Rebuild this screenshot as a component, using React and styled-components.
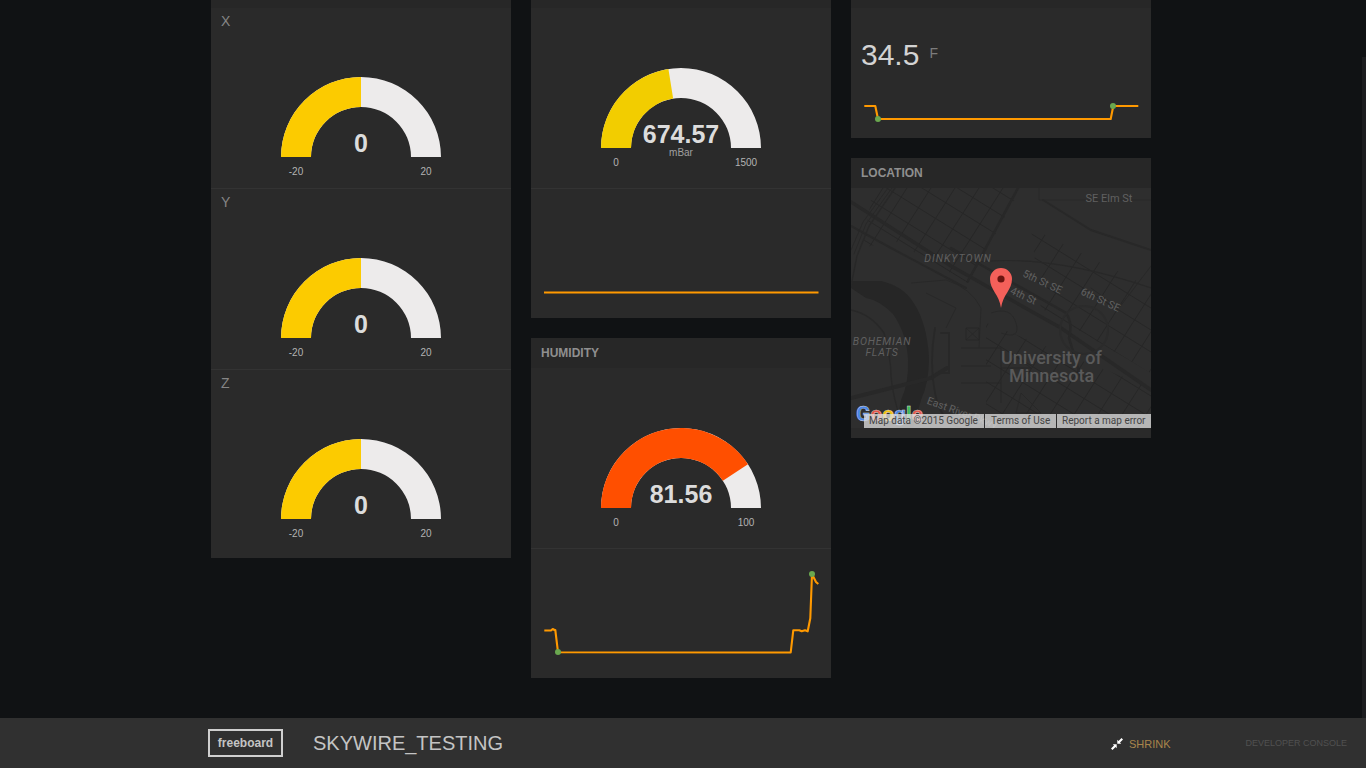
import React from "react";
import styled, { createGlobalStyle } from "styled-components";

const Global = createGlobalStyle`
  html, body { margin: 0; padding: 0; height: 100%; background: #101214; overflow: hidden; }
  #root { height: 100%; }
  * { box-sizing: border-box; }
`;

const Page = styled.div`
  height: 100vh;
  display: flex;
  flex-direction: column;
  font-family: "Liberation Sans", Arial, sans-serif;
  background: #101214;
`;
const Main = styled.main`
  flex: 1;
  min-height: 0;
  display: flex;
  overflow: hidden;
`;
const Board = styled.div`
  flex: 1;
  display: flex;
  justify-content: center;
  align-items: flex-start;
  gap: 20px;
  margin-top: -22px;
`;
const Gutter = styled.div`
  width: 4px;
  padding-top: 57px;
`;
const Thumb = styled.div`
  height: 100%;
  background: #1c1d1f;
`;
const Column = styled.div`
  width: 300px;
  display: flex;
  flex-direction: column;
  gap: 20px;
`;
const Pane = styled.section`
  background: #2a2a2a;
  padding-bottom: ${(p) => p.$bottom || 0}px;
`;
const PaneHeader = styled.header`
  height: 30px;
  line-height: 30px;
  padding-left: 10px;
  background: #272727;
  color: #8f8f8f;
  font-size: 12px;
  font-weight: 700;
`;
const Widget = styled.div`
  height: ${(p) => p.$height}px;
  & + & {
    border-top: 1px solid #333;
  }
`;
const WidgetTitle = styled.div`
  height: 49px;
  padding: 5px 10px 0;
  font-size: 14px;
  line-height: 16px;
  color: #858585;
`;
const GaugeSpacer = styled.div`
  height: 40px;
`;
const Svg = styled.svg`
  display: block;
`;
const ValueRow = styled.div`
  height: 70px;
  padding: 28px 10px 0;
  display: flex;
  align-items: flex-start;
`;
const BigValue = styled.span`
  font-size: 30px;
  line-height: 38px;
  color: #d3d3d3;
`;
const Units = styled.span`
  margin: 8px 0 0 10px;
  font-size: 14px;
  line-height: 18px;
  color: #7c7c7c;
`;
const MapWrap = styled.div`
  position: relative;
  height: 240px;
  overflow: hidden;
`;
const GoogleLogo = styled.div`
  position: absolute;
  left: 5px;
  bottom: 0;
  font-family: Roboto, sans-serif;
  font-size: 21px;
  line-height: 27px;
  font-weight: 700;
  -webkit-text-stroke: 0.4px #ddd;
`;
const LogoLetter = styled.span`
  color: ${(p) => p.$c};
`;
const Attribution = styled.div`
  position: absolute;
  right: 0;
  bottom: 0;
  width: 287px;
  height: 14px;
  display: flex;
  gap: 1px;
`;
const AttributionItem = styled.span`
  flex: ${(p) => `0 0 ${p.$w}px`};
  padding-left: ${(p) => p.$pad}px;
  background: rgba(225, 225, 225, 0.76);
  color: #444;
  font-family: Roboto, sans-serif;
  font-size: 10px;
  line-height: 14px;
  white-space: nowrap;
`;
const Footer = styled.footer`
  flex: 0 0 50px;
  display: flex;
  align-items: center;
  padding: 0 19px 0 208px;
  background: #303030;
`;
const Logo = styled.div`
  width: 75px;
  height: 28px;
  border: 2px solid #cfcfcf;
  color: #c4c4c4;
  font-size: 12px;
  font-weight: 700;
  line-height: 24px;
  text-align: center;
`;
const BoardTitle = styled.h1`
  margin: 0 0 0 30px;
  font-size: 20px;
  font-weight: 400;
  line-height: 28px;
  color: #c4c4c4;
`;
const Shrink = styled.div`
  margin-left: auto;
  display: flex;
  align-items: center;
  gap: 6px;
  color: #a9854b;
  font-size: 11px;
  line-height: 14px;
  padding-top: 2px;
`;
const DevConsole = styled.div`
  margin-left: 75px;
  color: #505050;
  font-size: 9px;
  line-height: 14px;
`;

const gaugeText = {
  fontFamily: '"Liberation Sans", Arial, sans-serif',
};

function Gauge({ value, min, max, color, units }) {
  const f = (value - min) / (max - min);
  const a = Math.PI * (1 - f);
  const cx = 150;
  const cy = 100;
  const R = 80;
  const r = 50;
  const x1 = cx + R * Math.cos(a);
  const y1 = cy - R * Math.sin(a);
  const x2 = cx + r * Math.cos(a);
  const y2 = cy - r * Math.sin(a);
  const label = String(value);
  return (
    <Svg width="300" height="125" viewBox="0 0 300 125">
      <path
        d={`M${cx - R} ${cy}A${R} ${R} 0 0 1 ${cx + R} ${cy}H${cx + r}A${r} ${r} 0 0 0 ${cx - r} ${cy}Z`}
        fill="#edebeb"
      />
      <path
        d={`M${cx - R} ${cy}A${R} ${R} 0 0 1 ${x1} ${y1}L${x2} ${y2}A${r} ${r} 0 0 0 ${cx - r} ${cy}Z`}
        fill={color}
      />
      <text
        x={cx}
        y={95}
        textAnchor="middle"
        fontSize="25"
        fontWeight="700"
        fill="#dcdcdc"
        style={gaugeText}
      >
        {label}
      </text>
      {units && (
        <text x={cx} y={108} textAnchor="middle" fontSize="10" fill="#a0a0a0" style={gaugeText}>
          {units}
        </text>
      )}
      <text x={cx - 65} y={118} textAnchor="middle" fontSize="10" fill="#b3b3b3" style={gaugeText}>
        {min}
      </text>
      <text x={cx + 65} y={118} textAnchor="middle" fontSize="10" fill="#b3b3b3" style={gaugeText}>
        {max}
      </text>
    </Svg>
  );
}

function Spark({ height, points, dots = [] }) {
  return (
    <Svg width="300" height={height} viewBox={`0 0 300 ${height}`}>
      <polyline points={points} fill="none" stroke="#ff9900" strokeWidth="2.1" strokeLinejoin="round" />
      {dots.map(([x, y]) => (
        <circle key={`${x}-${y}`} cx={x} cy={y} r="3" fill="#6aa84f" />
      ))}
    </Svg>
  );
}

const gridA = Array.from({ length: 22 }, (_, i) => -220 + i * 22);
const gridB = Array.from({ length: 26 }, (_, i) => -40 + i * 24);

function MapDrawing() {
  const road = "#282828";
  const thin = "#272727";
  const lab = { fontFamily: "Roboto, sans-serif" };
  return (
    <Svg width="300" height="240" viewBox="0 0 300 240">
      <defs>
        <clipPath id="gridTop">
          <polygon points="22,0 170,0 117,95 42,52 12,60" />
        </clipPath>
        <clipPath id="gridBottom">
          <polygon points="135,135 300,200 300,240 135,240" />
        </clipPath>
        <clipPath id="gridRight">
          <polygon points="180,40 300,100 300,185 190,120" />
        </clipPath>
      </defs>
      <rect width="300" height="240" fill="#2e2e2e" />
      {/* river */}
      <path d="M0 93L30 93Q52 98 62 114Q76 134 78 170Q78 195 70 212L62 240H45L50 212Q58 195 57 172Q56 146 42 126Q28 112 15 110L0 100Z" fill="#262626" />
      {/* street grids */}
      {[["gridTop"], ["gridRight"], ["gridBottom"]].map(([id]) => (
        <g key={id} clipPath={`url(#${id})`} stroke={thin} strokeWidth="1" fill="none">
          {gridA.map((c) => (
            <line key={`a${c}`} x1="0" y1={c} x2="300" y2={c + 186} />
          ))}
          {gridB.map((c) => (
            <line key={`b${c}`} x1={c} y1="0" x2={c - 160} y2="250" />
          ))}
        </g>
      ))}
      {/* highways and main roads */}
      <g stroke={road} fill="none" strokeLinecap="round">
        <path d="M0 14L100 78L210 140L300 202" strokeWidth="3.5" />
        <path d="M0 38L40 60L115 100" strokeWidth="2" />
        <path d="M100 60L215 125Q222 135 218 150L230 190" strokeWidth="2.5" />
        <path d="M167 0L117 93" strokeWidth="2.5" />
        <path d="M44 0L18 38L6 68L0 98" strokeWidth="1.4" />
        <path d="M41 0L15 36L3 66" strokeWidth="1" />
        <path d="M37 0L12 34L0 62" strokeWidth="1" />
        <path d="M0 210L80 190L96 180" strokeWidth="4" />
        <path d="M0 122Q20 126 33 145Q40 170 40 188Q42 210 50 232" strokeWidth="1.4" />
        <path d="M84 140Q78 175 84 205T110 240" strokeWidth="1.8" />
        <path d="M90 145H98V185H88" strokeWidth="2" />
        <path d="M188 0V12H300" strokeWidth="1" />
        <path d="M192 12L240 42L300 62" strokeWidth="2" />
        <path d="M125 74Q200 66 300 100" strokeWidth="1.2" />
        <circle cx="233" cy="142" r="24" stroke="#2b2b2b" strokeWidth="2" />
        <path d="M300 78L268 120L240 100" strokeWidth="1" />
      </g>
      {/* campus paths */}
      <g stroke={thin} fill="none" strokeWidth="0.8">
        <path d="M60 95L95 92Q120 100 130 120L128 160" />
        <path d="M75 105L105 120L95 140" />
        <path d="M115 140L128 152M115 152L128 140M115 140H128V152H115Z" />
        <path d="M110 160H150V215M110 178H140M110 195H150" />
        <path d="M160 165L180 180H150M170 205L190 225H165Z" />
        <path d="M140 125Q160 118 165 135T150 145" />
      </g>
      <g fill="#606060" style={lab}>
        <text x="258" y="14" textAnchor="middle" fontSize="11">SE Elm St</text>
        <text x="107" y="74" textAnchor="middle" fontSize="10.5" fontStyle="italic" letterSpacing="1">DINKYTOWN</text>
        <text x="31" y="157" textAnchor="middle" fontSize="10.5" fontStyle="italic" letterSpacing="0.8">BOHEMIAN</text>
        <text x="31" y="168" textAnchor="middle" fontSize="10.5" fontStyle="italic" letterSpacing="0.8">FLATS</text>
        <text transform="translate(190 97) rotate(25)" textAnchor="middle" fontSize="10.5">5th St SE</text>
        <text transform="translate(171 111) rotate(25)" textAnchor="middle" fontSize="10.5">4th St</text>
        <text transform="translate(248 115) rotate(25)" textAnchor="middle" fontSize="10.5">6th St SE</text>
        <text transform="translate(110 228) rotate(20)" textAnchor="middle" fontSize="10.5">East River Pkwy</text>
        <text x="252" y="237" textAnchor="middle" fontSize="10.5" fill="#444">Fulton St SE</text>
        <text x="200.5" y="176" textAnchor="middle" fontSize="18" fontWeight="500" fill="#5a5a5a">University of</text>
        <text x="200.5" y="194" textAnchor="middle" fontSize="18" fontWeight="500" fill="#5a5a5a">Minnesota</text>
      </g>
      <path d="M150 120C148 106 139 102 139 91A11 11 0 0 1 161 91C161 102 152 106 150 120Z" fill="#f4605a" />
      <circle cx="150" cy="91" r="3.6" fill="#6b1410" />
    </Svg>
  );
}

function ShrinkIcon() {
  return (
    <svg width="12" height="12" viewBox="0 0 12 12">
      <path d="M0 10.5L3 7.5L1.8 6.3H5.7V10.2L4.5 9L1.5 12Z" fill="#fff" />
      <path d="M12 1.5L9 4.5L10.2 5.7H6.3V1.8L7.5 3L10.5 0Z" fill="#fff" />
    </svg>
  );
}

export default function App() {
  return (
    <Page>
      <Global />
      <Main>
        <Board>
          <Column>
            <Pane $bottom={8}>
              <PaneHeader />
              {[
                ["X", 180],
                ["Y", 181],
                ["Z", 181],
              ].map(([t, h]) => (
                <Widget key={t} $height={h}>
                  <WidgetTitle>{t}</WidgetTitle>
                  <Gauge value={0} min={-20} max={20} color="#fccb00" />
                </Widget>
              ))}
            </Pane>
          </Column>
          <Column>
            <Pane>
              <PaneHeader />
              <Widget $height={180}>
                <GaugeSpacer />
                <Gauge value={674.57} min={0} max={1500} color="#f2cd00" units="mBar" />
              </Widget>
              <Widget $height={130}>
                <Spark height={129} points="13,103.5 287.5,103.5" />
              </Widget>
            </Pane>
            <Pane>
              <PaneHeader>HUMIDITY</PaneHeader>
              <Widget $height={180}>
                <GaugeSpacer />
                <Gauge value={81.56} min={0} max={100} color="#ff4f00" />
              </Widget>
              <Widget $height={130}>
                <Spark
                  height={129}
                  points="13.3,81.5 20,81.5 21.7,80 23.5,81 24.3,81 27,103.2 259.7,103.5 262.3,81.2 268.3,81.2 270.7,82.3 274,81.2 276.7,82.3 279.3,69.3 281,25 282.7,28.5 285,33 287.3,35"
                  dots={[
                    [27, 103],
                    [281, 25],
                  ]}
                />
              </Widget>
            </Pane>
          </Column>
          <Column>
            <Pane>
              <PaneHeader />
              <ValueRow>
                <BigValue>34.5</BigValue>
                <Units>F</Units>
              </ValueRow>
              <Widget $height={60}>
                <Spark
                  height={60}
                  points="13.3,28 24.3,28 27,41 259.7,41 262.3,28 287.3,28"
                  dots={[
                    [27, 41],
                    [262, 28],
                  ]}
                />
              </Widget>
            </Pane>
            <Pane $bottom={10}>
              <PaneHeader>LOCATION</PaneHeader>
              <MapWrap>
                <MapDrawing />
                <GoogleLogo>
                  <LogoLetter $c="#4a86e8">G</LogoLetter>
                  <LogoLetter $c="#e5564a">o</LogoLetter>
                  <LogoLetter $c="#f4c20d">o</LogoLetter>
                  <LogoLetter $c="#4a86e8">g</LogoLetter>
                  <LogoLetter $c="#3cba54">l</LogoLetter>
                  <LogoLetter $c="#e5564a">e</LogoLetter>
                </GoogleLogo>
                <Attribution>
                  <AttributionItem $w={120} $pad={5}>Map data ©2015 Google</AttributionItem>
                  <AttributionItem $w={71} $pad={6}>Terms of Use</AttributionItem>
                  <AttributionItem $w={94} $pad={5}>Report a map error</AttributionItem>
                </Attribution>
              </MapWrap>
            </Pane>
          </Column>
        </Board>
        <Gutter>
          <Thumb />
        </Gutter>
      </Main>
      <Footer>
        <Logo>freeboard</Logo>
        <BoardTitle>SKYWIRE_TESTING</BoardTitle>
        <Shrink>
          <ShrinkIcon />
          SHRINK
        </Shrink>
        <DevConsole>DEVELOPER CONSOLE</DevConsole>
      </Footer>
    </Page>
  );
}
